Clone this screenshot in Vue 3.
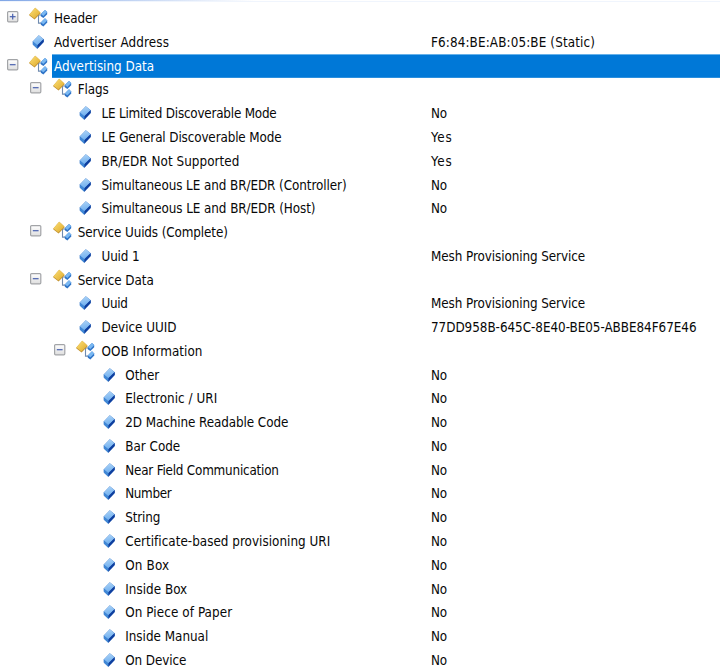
<script setup>
const FONT = '13.33px "DejaVu Sans Condensed"'
const ctx = document.createElement('canvas').getContext('2d')
ctx.font = FONT

function tracking(text, width) {
  return { letterSpacing: ((width - 1 - ctx.measureText(text).width) / text.length).toFixed(3) + 'px' }
}

const NO = ['No', 17]
const YES = ['Yes', 22.5]
const MESH = ['Mesh Provisioning Service', 155]

// kind: 'open' | 'closed' for groups, 'leaf' for fields
const rows = [
  [0, 'closed', 'Header', 44],
  [0, 'leaf', 'Advertiser Address', 116, ['F6:84:BE:AB:05:BE (Static)', 165]],
  [0, 'open', 'Advertising Data', 101],
  [1, 'open', 'Flags', 32],
  [2, 'leaf', 'LE Limited Discoverable Mode', 176, NO],
  [2, 'leaf', 'LE General Discoverable Mode', 181, YES],
  [2, 'leaf', 'BR/EDR Not Supported', 139, YES],
  [2, 'leaf', 'Simultaneous LE and BR/EDR (Controller)', 246, NO],
  [2, 'leaf', 'Simultaneous LE and BR/EDR (Host)', 215, NO],
  [1, 'open', 'Service Uuids (Complete)', 151],
  [2, 'leaf', 'Uuid 1', 39, MESH],
  [1, 'open', 'Service Data', 77],
  [2, 'leaf', 'Uuid', 27, MESH],
  [2, 'leaf', 'Device UUID', 76, ['77DD958B-645C-8E40-BE05-ABBE84F67E46', 266.5]],
  [2, 'open', 'OOB Information', 102],
  [3, 'leaf', 'Other', 35, NO],
  [3, 'leaf', 'Electronic / URI', 93, NO],
  [3, 'leaf', '2D Machine Readable Code', 164, NO],
  [3, 'leaf', 'Bar Code', 56, NO],
  [3, 'leaf', 'Near Field Communication', 154.5, NO],
  [3, 'leaf', 'Number', 47, NO],
  [3, 'leaf', 'String', 36, NO],
  [3, 'leaf', 'Certificate-based provisioning URI', 206, NO],
  [3, 'leaf', 'On Box', 45, NO],
  [3, 'leaf', 'Inside Box', 63, NO],
  [3, 'leaf', 'On Piece of Paper', 108, NO],
  [3, 'leaf', 'Inside Manual', 84, NO],
  [3, 'leaf', 'On Device', 62, NO],
].map(([level, kind, label, width, value]) => ({ level, kind, label, width, value, selected: label === 'Advertising Data' }))
</script>

<template>
  <div class="panel">
    <svg class="defs" width="0" height="0">
      <defs>
        <linearGradient id="gold" x1="0" y1="0" x2="1" y2="1">
          <stop offset="0" stop-color="#fbe07c" /><stop offset=".55" stop-color="#ecc24c" /><stop offset="1" stop-color="#d9a632" />
        </linearGradient>
        <linearGradient id="face" x1="0.4" y1="0" x2="0.6" y2="1">
          <stop offset="0" stop-color="#acd3f7" /><stop offset="1" stop-color="#6aacee" />
        </linearGradient>
        <linearGradient id="box" x1="0" y1="0" x2="0" y2="1">
          <stop offset="0" stop-color="#ffffff" /><stop offset="1" stop-color="#dedede" />
        </linearGradient>
      </defs>
    </svg>
    <div class="edge"></div>
    <div class="tree">
      <div v-for="row in rows" :key="row.label" class="row">
        <div class="indent" :style="{ width: row.level * 23.75 + 'px' }"></div>
        <div class="toggle">
          <svg v-if="row.kind !== 'leaf'" width="12" height="12" viewBox="0 0 12 12">
            <rect x=".6" y=".6" width="10.2" height="10.2" rx="1" fill="url(#box)" stroke="#a2a4a7" stroke-width="1.2" />
            <path d="M2.8 5.7h5.8" stroke="#4860ae" stroke-width="1.2" />
            <path v-if="row.kind === 'closed'" d="M5.7 2.8v5.8" stroke="#4860ae" stroke-width="1.2" />
          </svg>
        </div>
        <div class="icon">
          <svg v-if="row.kind === 'leaf'" width="20" height="20" viewBox="0 0 20 20">
            <path d="M3.8 9.4 9.8 3.2 14.7 7.2V10L8.3 16.8 3.8 12.4Z" fill="#2866bd" />
            <path d="M3.8 9.4 9.8 3.2 14.7 7.2 8.3 13.4Z" fill="url(#face)" />
            <path d="M8.3 13.2 14.7 7V10L8.3 16.8Z" fill="#0f3f9f" />
            <path d="M3.8 9.4 8.3 13.2V16.8L3.8 12.4Z" fill="#4088d6" />
          </svg>
          <svg v-else width="20" height="20" viewBox="0 0 20 20">
            <path d="M9.5 7v8.1h3.4M9.2 7h3.4" fill="none" stroke="#6f8bb0" stroke-width="1.1" />
            <path d="M.4 6.4 6.2-.2 11.4 4.5V5.6L5.6 11.4 .4 7.4Z" fill="#c09030" />
            <path d="M.4 6.4 6.2-.2 11.4 4.5 5.4 10.5Z" fill="url(#gold)" />
            <g v-for="y in [0, 8.4]" :key="y" :transform="`translate(0 ${y})`">
              <path d="M11.8 6.1 16 1.9 18.2 4V6.2L14.4 10 11.8 8.3Z" fill="#2f74c8" />
              <path d="M11.8 6.1 16 1.9 18.2 4 14.4 7.9Z" fill="#7ab8f2" />
            </g>
          </svg>
        </div>
        <div class="content" :class="{ selected: row.selected }">
          <span class="label" :style="tracking(row.label, row.width)">{{ row.label }}</span>
        </div>
        <div v-if="row.value" class="value">
          <span :style="tracking(...row.value)">{{ row.value[0] }}</span>
        </div>
      </div>
    </div>
  </div>
</template>

<style>
body { background: #fff; overflow: hidden; }
</style>

<style scoped>
.panel {
  width: 720px;
  height: 672px;
  overflow: hidden;
  background: #fff;
  color: #080808;
  font: 13.33px/16px "DejaVu Sans Condensed", sans-serif;
}
.defs { display: block; }
.edge {
  height: 1px;
  background: linear-gradient(90deg, #80a6e6, #fff 255px);
  border-bottom: 1px solid #f0f5fd;
}
.tree { padding-top: 4.3px; }
.row { display: flex; height: 23.78px; align-items: center; }
.indent { flex: none; }
.toggle { flex: none; width: 22px; padding: 0 0 2px 6.6px; box-sizing: content-box; margin-right: .4px; }
.toggle svg, .icon svg { display: block; overflow: visible; }
.icon { flex: none; width: 23px; }
.content { flex: 1; height: 100%; box-sizing: border-box; display: flex; align-items: center; padding: 2px 0 0 2px; }
.selected { background: #0078d7; color: #fff; box-shadow: inset 0 1px #66b1e9, inset 0 -1px #2b8fde; }
.label, .value { white-space: nowrap; }
.value { width: 289px; flex: none; padding-top: 2px; }
</style>
